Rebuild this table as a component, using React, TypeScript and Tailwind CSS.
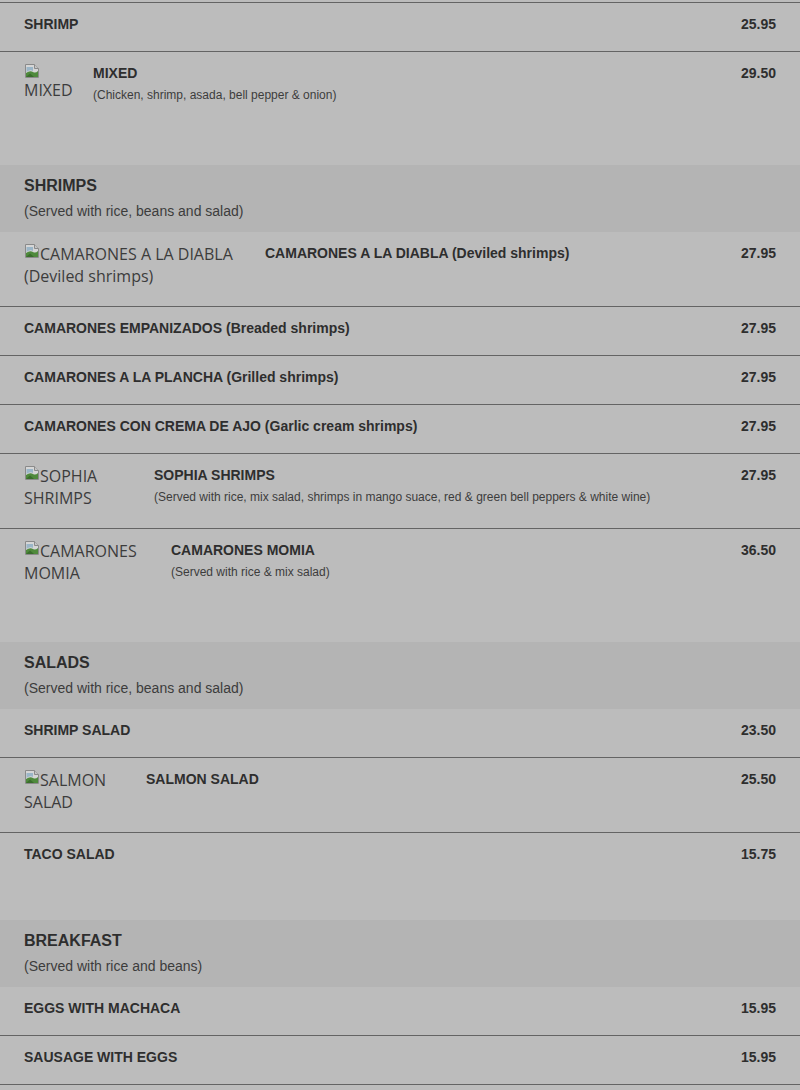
import React from "react";

type Item = {
  name: string;
  price: string;
  desc?: string;
  img?: string;
  imgW?: number;
};

type Section = {
  title?: string;
  sub?: string;
  items: Item[];
  last?: boolean;
};

const sections: Section[] = [
  {
    items: [
      { name: "SHRIMP", price: "25.95" },
      {
        name: "MIXED",
        price: "29.50",
        desc: "(Chicken, shrimp, asada, bell pepper & onion)",
        img: "MIXED",
        imgW: 57,
      },
    ],
  },
  {
    title: "SHRIMPS",
    sub: "(Served with rice, beans and salad)",
    items: [
      {
        name: "CAMARONES A LA DIABLA (Deviled shrimps)",
        price: "27.95",
        img: "CAMARONES A LA DIABLA (Deviled shrimps)",
        imgW: 229,
      },
      { name: "CAMARONES EMPANIZADOS (Breaded shrimps)", price: "27.95" },
      { name: "CAMARONES A LA PLANCHA (Grilled shrimps)", price: "27.95" },
      { name: "CAMARONES CON CREMA DE AJO (Garlic cream shrimps)", price: "27.95" },
      {
        name: "SOPHIA SHRIMPS",
        price: "27.95",
        desc: "(Served with rice, mix salad, shrimps in mango suace, red & green bell peppers & white wine)",
        img: "SOPHIA SHRIMPS",
        imgW: 118,
      },
      {
        name: "CAMARONES MOMIA",
        price: "36.50",
        desc: "(Served with rice & mix salad)",
        img: "CAMARONES MOMIA",
        imgW: 135,
      },
    ],
  },
  {
    title: "SALADS",
    sub: "(Served with rice, beans and salad)",
    items: [
      { name: "SHRIMP SALAD", price: "23.50" },
      { name: "SALMON SALAD", price: "25.50", img: "SALMON SALAD", imgW: 110 },
      { name: "TACO SALAD", price: "15.75" },
    ],
  },
  {
    title: "BREAKFAST",
    sub: "(Served with rice and beans)",
    last: true,
    items: [
      { name: "EGGS WITH MACHACA", price: "15.95" },
      { name: "SAUSAGE WITH EGGS", price: "15.95" },
      { name: "", price: "" },
    ],
  },
];

function BrokenIcon() {
  return (
    <svg
      width="16"
      height="16"
      viewBox="0 0 16 16"
      className="float-left"
      aria-hidden="true"
    >
      <path d="M1.5 1.5 H10.5 L14.5 5.5 V14.5 H1.5 Z" fill="#d6d6d6" stroke="#8a8a8a" />
      <path d="M10.5 1.5 V5.5 H14.5" fill="#c4c4c4" stroke="#8a8a8a" />
      <path d="M2 14 L2 10 Q6 7 9 9 Q11.5 10.5 14 8 L14 14 Z" fill="#4f8a3c" />
      <path d="M2 14 L6 10.5 L10 14 Z" fill="#3a6e2c" />
      <path d="M2.5 4 H9 V8 Q6 6 2.5 9 Z" fill="#9bb6c8" />
    </svg>
  );
}

function Row({ item, last }: { item: Item; last: boolean }) {
  return (
    <div
      className={
        "flex items-start px-6 pt-[11px] pb-[17px] " +
        (last ? "mb-[39px]" : "border-b border-[#646464]")
      }
    >
      {item.img && (
        <div
          className="h-[46px] shrink-0 mr-3 font-['Open_Sans',sans-serif] text-[16px] leading-[22px] text-[#3c3c3c]"
          style={{ width: item.imgW }}
        >
          <BrokenIcon />
          {item.img}
        </div>
      )}
      <div className="flex-1 min-w-0">
        <div className="text-[14px] leading-[20px] font-bold text-[#2e2e2e]">
          {item.name}
        </div>
        {item.desc && (
          <div className="mt-[2px] text-[12px] leading-[20px] text-[#3c3c3c]">
            {item.desc}
          </div>
        )}
      </div>
      <div className="ml-4 text-[14px] leading-[20px] font-bold text-[#2e2e2e]">
        {item.price}
      </div>
    </div>
  );
}

export default function App() {
  return (
    <div className="min-h-[1090px] bg-[#bcbcbc] font-['Liberation_Sans',Arial,sans-serif] overflow-hidden">
      <div className="h-[3px] border-b border-[#646464]" />
      {sections.map((s, si) => (
        <div key={si}>
          {s.title && (
            <div className="bg-[#b4b4b4] px-6 pt-[11px] pb-[11px]">
              <div className="text-[16px] leading-[20px] font-bold text-[#2e2e2e]">
                {s.title}
              </div>
              <div className="mt-[5px] text-[14px] leading-[20px] text-[#3c3c3c]">
                {s.sub}
              </div>
            </div>
          )}
          {s.items.map((it, i) => (
            <Row
              key={i}
              item={it}
              last={!s.last && i === s.items.length - 1}
            />
          ))}
        </div>
      ))}
    </div>
  );
}
